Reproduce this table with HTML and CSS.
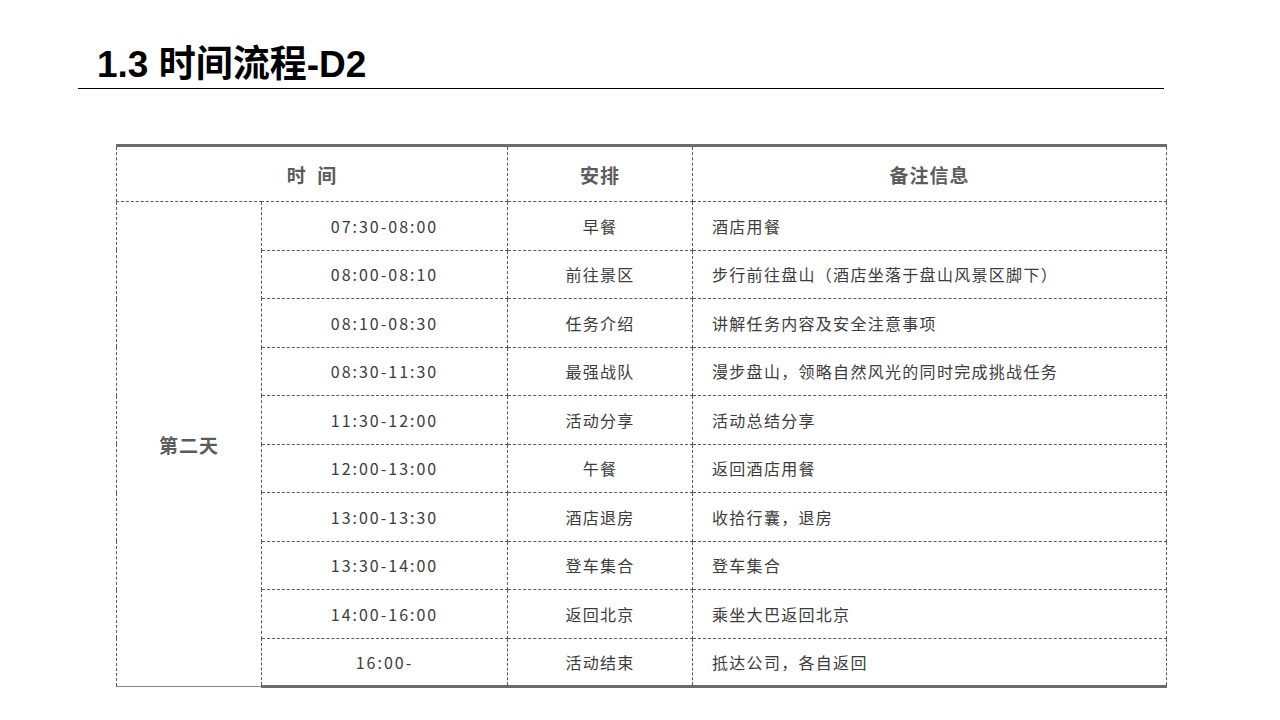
FILE: index.html
```html
<!DOCTYPE html>
<html lang="zh">
<head>
<meta charset="utf-8">
<title>1.3 时间流程-D2</title>
<link rel="stylesheet" href="styles.css">
</head>
<body>
<div class="page">
  <header class="title-bar">
    <h1 class="title">1.3 时间流程-D2</h1>
  </header>
  <table class="schedule">
    <colgroup>
      <col class="c-day">
      <col class="c-time">
      <col class="c-plan">
      <col class="c-note">
    </colgroup>
    <thead>
      <tr class="head-row">
        <th colspan="2">时&nbsp;&nbsp;间</th>
        <th>安排</th>
        <th>备注信息</th>
      </tr>
    </thead>
    <tbody>
      <tr>
        <td class="day" rowspan="10">第二天</td>
        <td class="time">07:30-08:00</td>
        <td class="plan">早餐</td>
        <td class="note">酒店用餐</td>
      </tr>
      <tr>
        <td class="time">08:00-08:10</td>
        <td class="plan">前往景区</td>
        <td class="note">步行前往盘山（酒店坐落于盘山风景区脚下）</td>
      </tr>
      <tr>
        <td class="time">08:10-08:30</td>
        <td class="plan">任务介绍</td>
        <td class="note">讲解任务内容及安全注意事项</td>
      </tr>
      <tr>
        <td class="time">08:30-11:30</td>
        <td class="plan">最强战队</td>
        <td class="note">漫步盘山，领略自然风光的同时完成挑战任务</td>
      </tr>
      <tr>
        <td class="time">11:30-12:00</td>
        <td class="plan">活动分享</td>
        <td class="note">活动总结分享</td>
      </tr>
      <tr>
        <td class="time">12:00-13:00</td>
        <td class="plan">午餐</td>
        <td class="note">返回酒店用餐</td>
      </tr>
      <tr>
        <td class="time">13:00-13:30</td>
        <td class="plan">酒店退房</td>
        <td class="note">收拾行囊，退房</td>
      </tr>
      <tr>
        <td class="time">13:30-14:00</td>
        <td class="plan">登车集合</td>
        <td class="note">登车集合</td>
      </tr>
      <tr>
        <td class="time">14:00-16:00</td>
        <td class="plan">返回北京</td>
        <td class="note">乘坐大巴返回北京</td>
      </tr>
      <tr class="last-row">
        <td class="time">16:00-</td>
        <td class="plan">活动结束</td>
        <td class="note">抵达公司，各自返回</td>
      </tr>
    </tbody>
  </table>
</div>
</body>
</html>
```

FILE: styles.css
```css
html, body {
  margin: 0;
  padding: 0;
  background: #ffffff;
}

.page {
  width: 1280px;
  height: 720px;
  overflow: hidden;
  font-family: "Noto Sans CJK SC", "Noto Sans", sans-serif;
}

.title-bar {
  margin-left: 78px;
  width: 1086px;
  padding-top: 42px;
  border-bottom: 1px solid #000000;
}

.title {
  margin: 0;
  padding-left: 19px;
  font-family: "Liberation Sans", "Noto Sans CJK SC", sans-serif;
  font-weight: bold;
  font-size: 37px;
  line-height: 46px;
  color: #000000;
  letter-spacing: 0;
}

.schedule {
  margin-top: 55px;
  margin-left: 116px;
  width: 1050px;
  border-collapse: collapse;
  table-layout: fixed;
  border-top: 3px solid #6b6b6b;
  color: #3c3c3c;
}

.c-day { width: 145px; }
.c-time { width: 246px; }
.c-plan { width: 185px; }
.c-note { width: 474px; }

.schedule th,
.schedule td {
  border: 1px dashed #5a5a5a;
  padding: 0;
}

.head-row th {
  height: 54px;
  font-size: 19px;
  font-weight: bold;
  color: #5c5c5c;
  letter-spacing: 1px;
  text-align: center;
  border-top: 3px solid #6b6b6b;
}

.schedule tbody tr {
  height: 48.5px;
}

.schedule td {
  font-size: 16px;
  letter-spacing: 1.3px;
  text-align: center;
  vertical-align: middle;
}

.schedule td.day {
  font-size: 19px;
  font-weight: bold;
  color: #5c5c5c;
  letter-spacing: 1px;
  border-bottom: 1px solid #8a8a8a;
}

.schedule td.time {
  letter-spacing: 2px;
}

.schedule td.note {
  text-align: left;
  padding-left: 19px;
}

.last-row td.time,
.last-row td.plan,
.last-row td.note {
  border-bottom: 3px solid #6b6b6b;
}
```
